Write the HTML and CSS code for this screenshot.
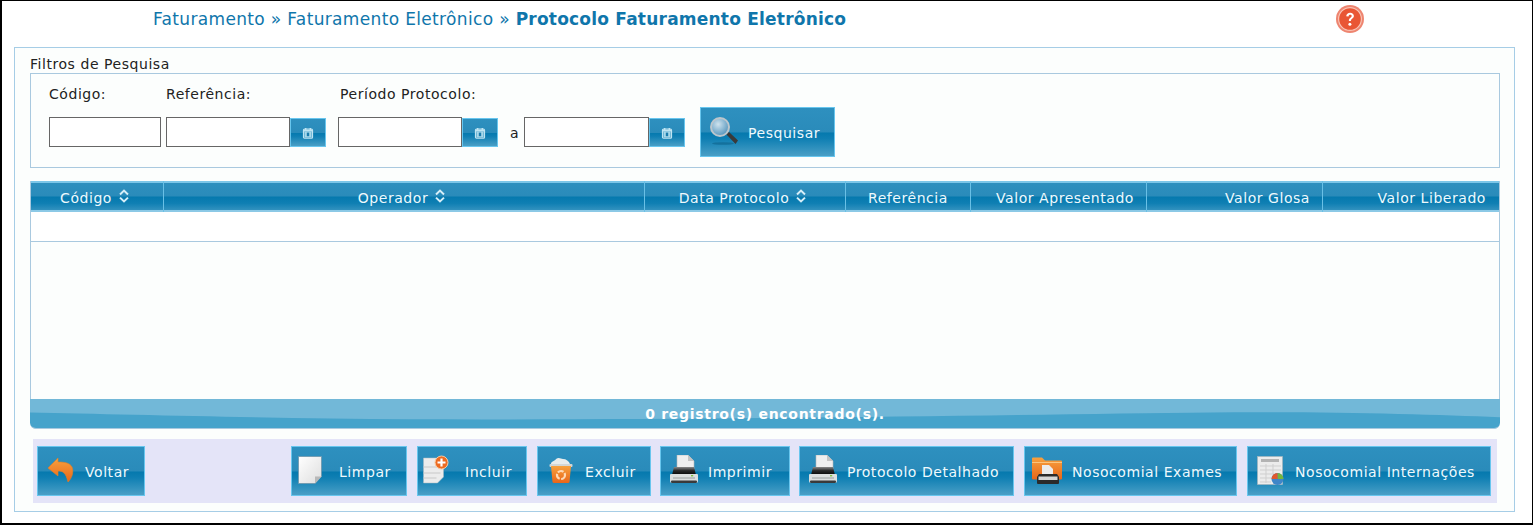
FILE: index.html
```html
<!DOCTYPE html>
<html lang="pt-BR">
<head>
<meta charset="utf-8">
<title>Protocolo Faturamento Eletrônico</title>
<link rel="stylesheet" href="styles.css">
</head>
<body>
<svg class="defs" width="0" height="0" aria-hidden="true">
  <defs>
    <linearGradient id="paper" x1="0" y1="0" x2="1" y2="1"><stop offset="0" stop-color="#ffffff"/><stop offset="1" stop-color="#dedede"/></linearGradient>
    <linearGradient id="orange" x1="0" y1="0" x2="0" y2="1"><stop offset="0" stop-color="#f7a13e"/><stop offset="1" stop-color="#e8661a"/></linearGradient>
    <linearGradient id="ink" x1="0" y1="0" x2="0" y2="1"><stop offset="0" stop-color="#8a8a8a"/><stop offset=".45" stop-color="#2a2a2a"/><stop offset="1" stop-color="#050505"/></linearGradient>
    <symbol id="i-cal" viewBox="0 0 12 12">
      <path d="M1.500 3.200a1 1 0 0 1 1-1h7a1 1 0 0 1 1 1v7a1 1 0 0 1-1 1h-7a1 1 0 0 1-1-1z" fill="none" stroke="#bfe4f2" stroke-width="1.200"/>
      <rect x="3" y="1" width="1.400" height="2.200" fill="#bfe4f2"/><rect x="7.600" y="1" width="1.400" height="2.200" fill="#bfe4f2"/>
      <rect x="2" y="3" width="8" height="1.600" fill="#bfe4f2"/>
      <rect x="2.400" y="4.600" width="7.200" height="5.800" fill="#a8d8ea"/>
      <rect x="4.800" y="5.600" width="2.400" height="3.600" fill="#1a7cad"/>
    </symbol>
    <symbol id="i-sort" viewBox="0 0 10 14">
      <path d="M1 5.400 5 1.600l4 3.800M1 8.600l4 3.800 4-3.800" fill="none" stroke="#d6eef8" stroke-width="2"/>
    </symbol>
    <symbol id="i-printer" viewBox="0 0 32 32">
      <path d="M11 0h11l6 6v8H11z" fill="#efefef" stroke="#b5b5b5" stroke-width=".6"/>
      <path d="M22 0v6h6z" fill="#c4c4c4"/>
      <path d="M8 12h20l2 8H6z" fill="url(#ink)"/>
      <path d="M5 19h26a1 1 0 0 1 1 1v6a2 2 0 0 1-2 2H6a2 2 0 0 1-2-2v-6a1 1 0 0 1 1-1z" fill="#dcdfdf"/>
      <rect x="5" y="25.500" width="26" height="2.500" rx="1" fill="#3a3a3a"/>
      <rect x="7" y="22.500" width="22" height="1" fill="#9aa0a0"/>
      <rect x="25" y="20" width="2.200" height="1.400" fill="#7fc241"/>
    </symbol>
  </defs>
</svg>
<div class="frame">
  <header class="top">
    <h1 class="crumbs">Faturamento » Faturamento Eletrônico » <strong>Protocolo Faturamento Eletrônico</strong></h1>
    <svg class="help" viewBox="0 0 28 28" aria-hidden="true">
      <circle cx="14" cy="14" r="14" fill="#ee8570"/>
      <circle cx="14" cy="14" r="11.400" fill="#e95634" stroke="#f8c4b6" stroke-width="1.200"/>
      <path d="M10.200 11.200c.2-2.300 1.800-3.500 3.900-3.500 2.200 0 3.800 1.300 3.800 3.200 0 2.600-3 2.700-3 5h-2c-.2-3.100 2.800-3.300 2.800-4.900 0-.8-.6-1.300-1.500-1.300-1 0-1.600.6-1.700 1.700z" fill="#fff"/>
      <circle cx="13.900" cy="19.300" r="1.500" fill="#fff"/>
    </svg>
  </header>

  <main class="panel">
    <div class="legend">Filtros de Pesquisa</div>
    <section class="filters">
      <div class="field f-code">
        <label class="lbl">Código:</label>
        <input class="inp w-code" type="text">
      </div>
      <div class="field f-ref">
        <label class="lbl">Referência:</label>
        <div class="group">
          <input class="inp w-date" type="text">
          <button class="btn cal" type="button"><svg class="cal-ico"><use href="#i-cal"/></svg></button>
        </div>
      </div>
      <div class="field f-per">
        <label class="lbl lbl-per">Período Protocolo:</label>
        <div class="group">
          <input class="inp w-date" type="text">
          <button class="btn cal" type="button"><svg class="cal-ico"><use href="#i-cal"/></svg></button>
          <span class="sep">a</span>
          <input class="inp w-date2" type="text">
          <button class="btn cal" type="button"><svg class="cal-ico"><use href="#i-cal"/></svg></button>
        </div>
      </div>
      <button class="btn action search" type="button">
        <svg class="ico" viewBox="0 0 32 32" aria-hidden="true">
          <defs><radialGradient id="lens" cx=".4" cy=".35" r=".7"><stop offset="0" stop-color="#cfe3ee"/><stop offset="1" stop-color="#4d90ba"/></radialGradient></defs>
          <ellipse cx="17" cy="27.500" rx="11" ry="1.300" fill="#0b5e86" opacity=".55"/>
          <path d="M20 18l3-2 9 8.500-2.500 3.500z" fill="#3a3a3a"/>
          <circle cx="14" cy="11" r="9" fill="url(#lens)" stroke="#bcc6cc" stroke-width="2"/>
        </svg>
        <span>Pesquisar</span>
      </button>
    </section>

    <section class="grid">
      <div class="grid-body">
        <table class="tbl">
          <colgroup>
            <col class="c1"><col class="c2"><col class="c3"><col class="c4"><col class="c5"><col class="c6"><col class="c7">
          </colgroup>
          <thead>
            <tr>
              <th class="sortable">Código <svg class="sort"><use href="#i-sort"/></svg></th>
              <th class="sortable">Operador <svg class="sort"><use href="#i-sort"/></svg></th>
              <th class="sortable">Data Protocolo <svg class="sort"><use href="#i-sort"/></svg></th>
              <th>Referência</th>
              <th class="right">Valor Apresentado</th>
              <th class="right">Valor Glosa</th>
              <th class="right">Valor Liberado</th>
            </tr>
          </thead>
          <tbody>
            <tr><td colspan="7"></td></tr>
          </tbody>
        </table>
      </div>
      <footer class="count">
        <svg class="wave" viewBox="0 0 1470 30" preserveAspectRatio="none" aria-hidden="true">
          <path d="M0 0H1470V19C1400 16 1300 13 1180 14 1000 16 700 22 380 21 240 20 100 16 0 14Z" fill="#72b8d8"/>
        </svg>
        <span class="count-text">0 registro(s) encontrado(s).</span>
      </footer>
    </section>

    <nav class="bar">
      <button class="btn action b-voltar" type="button">
        <svg class="ico" viewBox="0 0 32 32" aria-hidden="true">
          <path d="M15 3 5 13l10 8v-5c5 0 8 2 10 11 4-4 6-10 4-15-2-4-7-5-14-5z" fill="url(#orange)" stroke="#e8801f" stroke-width=".6"/>
        </svg>
        <span>Voltar</span>
      </button>
      <div class="bar-right">
        <button class="btn action b-limpar" type="button">
          <svg class="ico" viewBox="0 0 32 32" aria-hidden="true">
            <path d="M1.500 1.500h23v20l-6.500 7H1.500z" fill="url(#paper)" stroke="#6d96ab" stroke-width=".8"/>
            <path d="M24.500 21.500h-6.500v7z" fill="#b8b8b8"/>
          </svg>
          <span>Limpar</span>
        </button>
        <button class="btn action b-incluir" type="button">
          <svg class="ico" viewBox="0 0 32 32" aria-hidden="true">
            <path d="M.5 3h20v19l-6 6H.5z" fill="#ececec" stroke="#a9b9c2" stroke-width=".5"/>
            <path d="M.5 12h17M.5 18h17M.5 23h13" stroke="#c8c8c8" fill="none"/>
            <circle cx="18.500" cy="7.500" r="6.500" fill="#ec6b22" stroke="#f8c9a0"/>
            <path d="M18.500 3.500v8M14.500 7.500h8" stroke="#fff" stroke-width="2.200"/>
          </svg>
          <span>Incluir</span>
        </button>
        <button class="btn action b-excluir" type="button">
          <svg class="ico" viewBox="0 0 32 32" aria-hidden="true">
            <path d="M8 9c0-3 4-3 5-5 3-2 5 0 7 0 3 0 6 2 7 5l2 2H7z" fill="#e8ecec"/>
            <rect x="6.500" y="9" width="23" height="3" rx="1" fill="#d2d6d6"/>
            <path d="M8 11h20l-1.500 16a1.500 1.500 0 0 1-1.500 1H11a1.500 1.500 0 0 1-1.500-1z" fill="url(#orange)"/>
            <circle cx="18" cy="20" r="4" fill="none" stroke="#fdd9b5" stroke-width="2.200" stroke-dasharray="6 1.500"/>
          </svg>
          <span>Excluir</span>
        </button>
        <button class="btn action b-imprimir" type="button">
          <svg class="ico"><use href="#i-printer"/></svg>
          <span>Imprimir</span>
        </button>
        <button class="btn action b-detalhado" type="button">
          <svg class="ico"><use href="#i-printer"/></svg>
          <span>Protocolo Detalhado</span>
        </button>
        <button class="btn action b-exames" type="button">
          <svg class="ico" viewBox="0 0 32 32" aria-hidden="true">
            <path d="M2 3.500a1 1 0 0 1 1-1h9l3 3h16a1 1 0 0 1 1 1v17a1 1 0 0 1-1 1H3a1 1 0 0 1-1-1z" fill="url(#orange)"/>
            <path d="M2 7.500h30" stroke="#fbc57e"/>
            <path d="M12 10h7l4 4v7H12z" fill="#ececec"/>
            <path d="M9 19h18l2 3v6a1 1 0 0 1-1 1H8a1 1 0 0 1-1-1v-6z" fill="#2b2b2b"/>
            <rect x="8.500" y="21.500" width="19" height="3.500" fill="#d6d6d6"/>
          </svg>
          <span>Nosocomial Exames</span>
        </button>
        <button class="btn action b-intern" type="button">
          <svg class="ico" viewBox="0 0 32 32" aria-hidden="true">
            <rect x="4.500" y="1.500" width="25" height="28" fill="#ececec" stroke="#a8b4ba" stroke-width=".6"/>
            <rect x="8" y="4" width="18" height="3" fill="#b3b3b3"/>
            <path d="M7 11h21M7 15h21M7 19h14M7 23h11M7 27h11M13 9v19M20 9v10" stroke="#cfcfcf" fill="none"/>
            <circle cx="24.500" cy="24" r="6" fill="#3f86c8"/>
            <path d="M24.500 24v-6a6 6 0 0 1 6 6z" fill="#74b63e"/>
            <path d="M18.500 24a6 6 0 0 1 6-6V24z" fill="#e2592e"/>
          </svg>
          <span>Nosocomial Internações</span>
        </button>
      </div>
    </nav>
  </main>
</div>
</body>
</html>
```
FILE: styles.css
```css
* { box-sizing: border-box; }
html, body { margin: 0; padding: 0; }
body {
  width: 1533px;
  height: 525px;
  overflow: hidden;
  background: #fff;
  font-family: "DejaVu Sans", Verdana, sans-serif;
  font-size: 14px;
  letter-spacing: .55px;
  color: #222;
}
.defs { display: block; height: 0; }
.frame {
  width: 1533px;
  height: 525px;
  border: 1px solid #000;
  border-width: 1px 1px 2px 2px;
  padding: 0 17px 0 12px;
  background: #fff;
}
.top {
  height: 46px;
  display: flex;
  padding: 8px 0 0 139px;
}
.crumbs {
  margin: 0;
  font-size: 17px;
  font-weight: 400;
  line-height: 20px;
  letter-spacing: .34px;
  color: #0f76ab;
  width: 1183px;
  white-space: nowrap;
}
.crumbs strong { font-weight: 700; letter-spacing: .22px; }
.help { width: 28px; height: 28px; margin-top: -4px; }

.panel {
  height: 465px;
  border: 1px solid #a6cde6;
  background: #fcfefd;
  padding: 8px 14px 0 15px;
}
.legend { line-height: 17px; height: 17px; color: #222; }

.filters {
  height: 95px;
  border: 1px solid #a9c9df;
  display: flex;
  align-items: flex-start;
  padding: 0 0 0 18px;
}
.field { display: flex; flex-direction: column; }
.lbl { display: block; height: 43px; padding-top: 11px; line-height: 18px; }
.lbl-per { padding-left: 2px; }
.f-ref { margin-left: 5px; }
.f-per { margin-left: 12px; }
.group { display: flex; align-items: flex-start; }
.inp {
  display: block;
  height: 30px;
  padding: 0;
  border: 1px solid #666;
  background: #fff;
}
.w-code { width: 112px; }
.w-date { width: 124px; }
.w-date2 { width: 125px; }
.sep { width: 26px; padding-left: 7px; line-height: 32px; text-align: center; color: #222; }

.btn {
  font: inherit;
  letter-spacing: inherit;
  color: #eef9fd;
  border: 1px solid #68c6ee;
  padding: 0;
  background: linear-gradient(to bottom, #2e90bf 0, #2a8bba 50%, #0579ae 52%, #0f7fb3 64%, #4a9fc6 100%);
}
.cal { width: 36px; height: 29px; margin-top: 1px; display: flex; align-items: center; justify-content: center; }
.cal-ico { width: 12px; height: 12px; }
.action {
  height: 50px;
  display: flex;
  align-items: center;
  padding: 0 0 0 5px;
  white-space: nowrap;
}
.ico { width: 32px; height: 32px; flex: none; }
.action span { margin-left: 10px; padding-top: 2px; }
.search { width: 135px; margin: 33px 0 0 15px; }

.grid { margin-top: 13px; height: 248px; display: flex; flex-direction: column; }
.grid-body {
  flex: 1;
  border-left: 1px solid #a9c9df;
  border-right: 1px solid #a9c9df;
}
.tbl {
  width: 1468px;
  table-layout: fixed;
  border-collapse: separate;
  border-spacing: 0;
}
.c1 { width: 132px; } .c2 { width: 481px; } .c3 { width: 201px; } .c4 { width: 125px; }
.c5 { width: 176px; } .c6 { width: 176px; } .c7 { width: 177px; }
.tbl thead tr {
  background: linear-gradient(to bottom, #2e90bf 0, #2a8bba 48%, #0579ae 52%, #0f7fb3 72%, #3c97c2 100%);
  box-shadow: inset 0 2px 0 #7cc6e8, inset 0 -2px 0 #8cc9e6;
}
.tbl th {
  height: 31px;
  padding: 3px 12px 0;
  font-weight: 400;
  color: #eef9fd;
  text-align: center;
  border-left: 1px solid #69c0e6;
  line-height: 27px;
  white-space: nowrap;
}
.tbl th:first-child { border-left: 0; }
.tbl th.sortable { padding-right: 17px; }
.tbl th.right { text-align: right; }
.tbl th:last-child { padding-right: 13px; }
.sort { width: 10px; height: 14px; margin-left: 2px; vertical-align: 0; }
.tbl td { height: 30px; padding: 0; border-bottom: 1px solid #a9c9df; background: #fff; }
.count {
  position: relative;
  height: 30px;
  flex: none;
  background: #46a3cb;
  border-radius: 0 0 6px 6px;
  border-bottom: 1px solid #a9c9df;
  overflow: hidden;
  display: flex;
  align-items: center;
  justify-content: center;
}
.wave { position: absolute; inset: 0; width: 100%; height: 100%; }
.count-text { position: relative; color: #fff; font-weight: 700; letter-spacing: .71px; }

.bar {
  margin: 10px 3px 0 3px;
  height: 64px;
  background: #e4e4f8;
  display: flex;
  align-items: center;
  padding: 0 6px 0 4px;
}
.bar-right { margin-left: auto; display: flex; }
.b-voltar { width: 108px; }
.b-limpar { width: 116px; }
.b-incluir { width: 110px; margin-left: 10px; }
.b-excluir { width: 114px; margin-left: 10px; }
.b-imprimir { width: 130px; margin-left: 9px; }
.b-detalhado { width: 215px; margin-left: 9px; }
.b-exames { width: 213px; margin-left: 10px; }
.b-intern { width: 244px; margin-left: 10px; }
```
